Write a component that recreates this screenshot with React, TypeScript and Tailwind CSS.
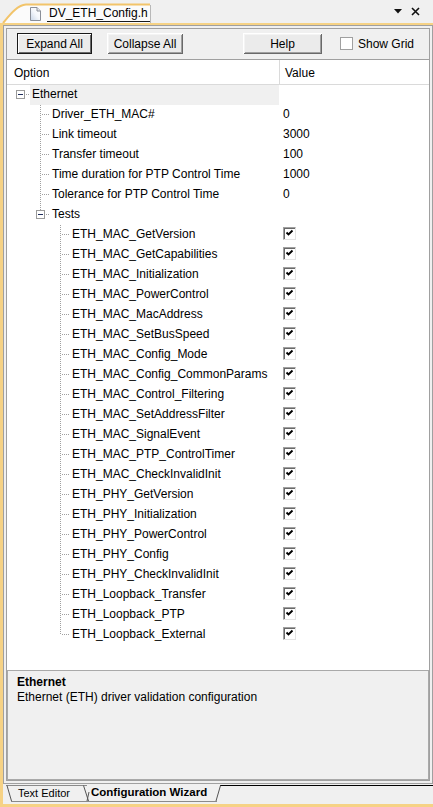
import React from 'react';

type Guide = 'none' | 'tee' | 'ell' | 'rootBox' | 'lastBox';

type Row = {
  label: string;
  guides: Guide[];
  value?: string;
  check?: boolean;
  selected?: boolean;
};

const TESTS = [
  'ETH_MAC_GetVersion',
  'ETH_MAC_GetCapabilities',
  'ETH_MAC_Initialization',
  'ETH_MAC_PowerControl',
  'ETH_MAC_MacAddress',
  'ETH_MAC_SetBusSpeed',
  'ETH_MAC_Config_Mode',
  'ETH_MAC_Config_CommonParams',
  'ETH_MAC_Control_Filtering',
  'ETH_MAC_SetAddressFilter',
  'ETH_MAC_SignalEvent',
  'ETH_MAC_PTP_ControlTimer',
  'ETH_MAC_CheckInvalidInit',
  'ETH_PHY_GetVersion',
  'ETH_PHY_Initialization',
  'ETH_PHY_PowerControl',
  'ETH_PHY_Config',
  'ETH_PHY_CheckInvalidInit',
  'ETH_Loopback_Transfer',
  'ETH_Loopback_PTP',
  'ETH_Loopback_External',
];

const rows: Row[] = [
  { label: 'Ethernet', guides: ['rootBox'], selected: true },
  { label: 'Driver_ETH_MAC#', guides: ['none', 'tee'], value: '0' },
  { label: 'Link timeout', guides: ['none', 'tee'], value: '3000' },
  { label: 'Transfer timeout', guides: ['none', 'tee'], value: '100' },
  { label: 'Time duration for PTP Control Time', guides: ['none', 'tee'], value: '1000' },
  { label: 'Tolerance for PTP Control Time', guides: ['none', 'tee'], value: '0' },
  { label: 'Tests', guides: ['none', 'lastBox'] },
  ...TESTS.map((t, i): Row => ({
    label: t,
    guides: ['none', 'none', i === TESTS.length - 1 ? 'ell' : 'tee'],
    check: true,
  })),
];

const dot = { stroke: '#a0a0a0', strokeWidth: 1, strokeDasharray: '1 1', shapeRendering: 'crispEdges' as const };

function GuideCell({ kind }: { kind: Guide }) {
  return (
    <svg width="20" height="20" className="block shrink-0">
      {kind === 'tee' && <line x1="10.5" y1="0" x2="10.5" y2="20" {...dot} />}
      {kind === 'ell' && <line x1="10.5" y1="0" x2="10.5" y2="10" {...dot} />}
      {(kind === 'tee' || kind === 'ell') && <line x1="12" y1="9.5" x2="20" y2="9.5" {...dot} />}
      {kind === 'lastBox' && <line x1="10.5" y1="0" x2="10.5" y2="5" {...dot} />}
      {(kind === 'rootBox' || kind === 'lastBox') && (
        <>
          <line x1="16" y1="9.5" x2="20" y2="9.5" {...dot} />
          <rect x="6.5" y="5.5" width="8" height="8" fill="#fff" stroke="#9a9a9a" shapeRendering="crispEdges" />
          <line x1="8" y1="9.5" x2="13" y2="9.5" stroke="#1f2d5c" strokeWidth="1" shapeRendering="crispEdges" />
        </>
      )}
    </svg>
  );
}

function CheckBox() {
  return (
    <span className="block w-[13px] h-[13px] border border-t-[#a0a0a0] border-l-[#a0a0a0] border-r-[#e3e3e3] border-b-[#e3e3e3] bg-white shadow-[inset_1px_1px_0_#696969]">
      <svg width="11" height="11" className="block">
        <polyline points="2.5,4.5 4.5,6.5 8.5,2.5" fill="none" stroke="#000" strokeWidth="1.9" />
      </svg>
    </span>
  );
}

function Button({ label, width, primary }: { label: string; width: string; primary?: boolean }) {
  return (
    <button
      className={
        'h-[21px] bg-[#ebebeb] text-[12px] text-black flex items-center justify-center ' +
        width +
        (primary
          ? ' border border-[#1a1a1a] shadow-[inset_1px_1px_0_#fff,inset_-1px_-1px_0_#696969]'
          : ' shadow-[inset_1px_1px_0_#fff,inset_-1px_-1px_0_#696969,inset_2px_2px_0_#f4f4f4,inset_-2px_-2px_0_#a0a0a0]')
      }
    >
      {label}
    </button>
  );
}

function FileIcon() {
  return (
    <svg width="11" height="14" viewBox="0 0 11 14" className="block shrink-0">
      <defs>
        <linearGradient id="pg" x1="0" y1="1" x2="1" y2="0">
          <stop offset="0" stopColor="#c9d6e8" />
          <stop offset="0.5" stopColor="#f4f7fb" />
          <stop offset="1" stopColor="#ffffff" />
        </linearGradient>
      </defs>
      <path d="M0.5 0.5 H7 L10.5 4 V13.5 H0.5 Z" fill="url(#pg)" stroke="#8a8f98" />
      <path d="M7 0.5 V4 H10.5" fill="#e6e9ee" stroke="#8a8f98" />
    </svg>
  );
}

export default function App() {
  return (
    <div className="w-[433px] h-[807px] bg-white flex flex-col font-['Liberation_Sans',Arial,sans-serif] text-[12px] text-black overflow-hidden">
      {/* document tab bar */}
      <div className="h-[23px] shrink-0 bg-[#f0f0f0] flex items-end">
        <div className="relative w-[151px] h-[20px] shrink-0">
          <svg width="151" height="20" className="absolute inset-0">
            <path d="M3 20 C9 13, 17 2, 26 1.5 L150 1.5 L150 20 Z" fill="#fbfbfb" />
            <path d="M3 20 C9 13, 17 2, 26 1.5 L150 1.5" fill="none" stroke="#f2c46a" strokeWidth="2" />
            <line x1="150.5" y1="2" x2="150.5" y2="20" stroke="#b8b8b8" />
          </svg>
          <div className="relative flex items-center h-full pl-[30px] gap-[6px] pt-[1px]">
            <FileIcon />
            <span className="text-[12px] leading-[16px] border-b border-[#1a1a1a] px-[2px] whitespace-nowrap">
              DV_ETH_Config.h
            </span>
          </div>
        </div>
        <div className="flex-1 flex items-center justify-end h-full gap-[9px] pr-[13px]">
          <svg width="8" height="5" className="block">
            <path d="M0 0 H8 L4 4.5 Z" fill="#111" />
          </svg>
          <svg width="9" height="9" className="block">
            <path d="M1 1 L8 8 M8 1 L1 8" stroke="#111" strokeWidth="1.6" />
          </svg>
        </div>
      </div>

      {/* yellow frame */}
      <div className="flex-1 flex flex-col border-l-[3px] border-t-[2px] border-b-[3px] border-[#f6d285] bg-[#f0f0f0]">
        <div className="flex-1 flex flex-col border border-[#a0a0a0] p-[2px]">
          <div className="flex-1 flex flex-col border border-[#a0a0a0] bg-[#f0f0f0]">
            {/* toolbar */}
            <div className="h-[30px] shrink-0 flex items-start pt-[4px] pl-[10px]">
              <Button label="Expand All" width="w-[75px]" primary />
              <div className="w-[15px]" />
              <Button label="Collapse All" width="w-[76px]" />
              <div className="w-[60px]" />
              <Button label="Help" width="w-[79px]" />
              <div className="w-[18px]" />
              <div className="h-[21px] flex items-center gap-[5px]">
                <span className="block w-[13px] h-[13px] bg-white border border-[#a0a0a0]" />
                <span>Show Grid</span>
              </div>
            </div>

            {/* option list */}
            <div className="flex-1 flex flex-col bg-white border-t border-[#a0a0a0]">
              <div className="h-[25px] shrink-0 flex border-b border-[#dadada]">
                <div className="w-[273px] border-r border-[#dadada] pl-[7px] flex items-center pt-[1px]">Option</div>
                <div className="pl-[5px] flex items-center pt-[1px]">Value</div>
              </div>
              {rows.map((r) => (
                <div key={r.label} className="h-[20px] flex">
                  <div className="w-[272px] flex pl-[3px]">
                    {r.guides.map((g, i) => (
                      <GuideCell key={i} kind={g} />
                    ))}
                    <div className={'flex-1 leading-[18px] pl-[2px] ' + (r.selected ? 'bg-[#f0f0f0]' : '')}>
                      {r.label}
                    </div>
                  </div>
                  <div className="flex-1 pl-[4px] flex items-start">
                    {r.value !== undefined && <span className="leading-[18px]">{r.value}</span>}
                    {r.check && (
                      <span className="pt-[2px]">
                        <CheckBox />
                      </span>
                    )}
                  </div>
                </div>
              ))}
            </div>

            {/* description */}
            <div className="h-[110px] shrink-0 border border-[#a9a9a9] bg-[#f0f0f0] pl-[9px] pt-[4px] text-[12px] leading-[15px]">
              <div className="font-bold">Ethernet</div>
              <div>Ethernet (ETH) driver validation configuration</div>
            </div>
          </div>
        </div>

        {/* bottom tabs */}
        <div className="relative h-[20px] shrink-0 text-[11px]">
          <svg width="430" height="20" className="absolute inset-0">
            <line x1="3" y1="1.5" x2="84" y2="1.5" stroke="#8a8a8a" />
            <line x1="217" y1="1.5" x2="430" y2="1.5" stroke="#000" />
            <path d="M4 1.5 L8.5 17" stroke="#555" fill="none" />
            <line x1="8" y1="17.5" x2="214" y2="17.5" stroke="#8a8a8a" />
            <path d="M86 8 L84 17" stroke="#555" fill="none" />
            <path d="M80.5 1.5 L85.5 17" stroke="#555" fill="none" />
            <path d="M217.5 1.5 L213 17" stroke="#555" fill="none" />
          </svg>
          <div className="relative flex h-[18px] items-center">
            <span className="pl-[15px] w-[88px]">Text Editor</span>
            <span className="font-bold text-[11.5px]">Configuration Wizard</span>
          </div>
        </div>
      </div>
    </div>
  );
}
